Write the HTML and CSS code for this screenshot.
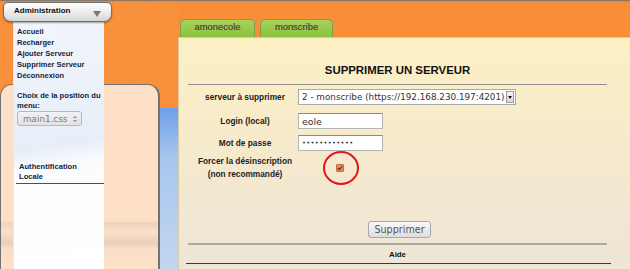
FILE: index.html
```html
<!DOCTYPE html>
<html lang="fr">
<head>
    <meta charset="UTF-8">
    <meta name="viewport" content="width=device-width, initial-scale=1.0">
    <title>Supprimer un serveur</title>
    <link rel="stylesheet" href="styles.css">
</head>
<body>
    <div class="page">
        <aside class="side">
            <div class="deco-peach"></div>
            <div class="deco-blue"></div>
            <nav class="menu">
                <div class="menu-head">Administration <span class="caret"></span></div>
                <div class="menu-body">
                    <ul class="menu-links">
                        <li><a href="#">Accueil</a></li>
                        <li><a href="#">Recharger</a></li>
                        <li><a href="#">Ajouter Serveur</a></li>
                        <li><a href="#">Supprimer Serveur</a></li>
                        <li><a href="#">Déconnexion</a></li>
                    </ul>
                    <p class="menu-label">Choix de la position du menu:</p>
                    <div class="css-select">main1.css <span class="spin"><i class="up"></i><i class="down"></i></span></div>
                    <p class="auth">Authentification<br>Locale</p>
                </div>
            </nav>
        </aside>
        <main class="main">
            <div class="tabs">
                <span class="tab">amonecole</span>
                <span class="tab">monscribe</span>
            </div>
            <div class="panel">
                <div class="inner">
                    <h1>SUPPRIMER UN SERVEUR</h1>
                    <form class="form" onsubmit="event.preventDefault();">
                        <div class="row row-server">
                            <label>serveur à supprimer</label>
                            <div class="select">
                                <span>2 - monscribe (https://192.168.230.197:4201)</span>
                                <span class="select-arrow"></span>
                            </div>
                        </div>
                        <div class="row row-login">
                            <label>Login (local)</label>
                            <input type="text" class="field" value="eole">
                        </div>
                        <div class="row row-pass">
                            <label>Mot de passe</label>
                            <input type="password" class="field" value="eoleeoleeole">
                        </div>
                        <div class="row row-force">
                            <label>Forcer la désinscription<br>(non recommandé)</label>
                            <div class="check-cell">
                                <span class="tick">
                                    <svg width="6" height="6" viewBox="0 0 6 6"><path d="M0.8 3 L2.4 4.6 L5.3 1.2" fill="none" stroke="#5b3020" stroke-width="1.1"/></svg>
                                </span>
                                <span class="mark"></span>
                            </div>
                        </div>
                        <div class="actions">
                            <button type="submit">Supprimer</button>
                        </div>
                    </form>
                    <div class="help">Aide</div>
                    <div class="bottom-rule"></div>
                </div>
            </div>
        </main>
    </div>
</body>
</html>
```

FILE: styles.css
```css
* {
    margin: 0;
    padding: 0;
    box-sizing: border-box;
}
body {
    width: 630px;
    height: 269px;
    overflow: hidden;
    font-family: "Liberation Sans", Arial, sans-serif;
    background: #f98e38;
}
.page {
    display: flex;
    height: 269px;
    background: #f98e38;
    box-shadow: inset 0 1px 0 #8b7766, inset 0 2px 0 #d98a4a;
}

/* left column */
.side {
    position: relative;
    width: 178px;
    display: flex;
    background: repeating-linear-gradient(135deg, rgba(255,255,255,0.06) 0 1px, transparent 1px 3px);
}
.deco-peach {
    width: 160px;
    margin-top: 84px;
    border: 1px solid #727272;
    border-right-width: 2px;
    border-bottom: none;
    border-radius: 12px 12px 0 0;
    background: linear-gradient(#fee0c8 0, #fee0c8 136px, #ecd3bd 138px, #f6dac3 143px, #fee0c8 146px, #f3d8c1 152px, #e8d0bb 158px, #fbdec7 164px, #fee0c8 100%);
}
.deco-blue {
    width: 18px;
    margin-top: 108px;
    background: linear-gradient(#6d9fe7, #a7c6ef 30%, #c3d6ee);
}
.menu {
    position: absolute;
    left: 3px;
    top: 2px;
    width: 109px;
}
.menu-head {
    position: relative;
    height: 20px;
    padding-left: 10px;
    border: 1px solid #707070;
    border-radius: 5px 5px 8px 8px;
    background: linear-gradient(#ffffff, #e9e9e9 60%, #d6d6d6);
    box-shadow: 0 1px 2px rgba(0, 0, 0, 0.35);
    font-size: 8px;
    font-weight: bold;
    line-height: 16px;
    color: #111;
}
.caret {
    position: absolute;
    right: 10px;
    top: 8px;
    border-left: 4px solid transparent;
    border-right: 4px solid transparent;
    border-top: 6px solid #7a7a7a;
}
.menu-body {
    margin-left: 10px;
    width: 91px;
    height: 247px;
    padding: 4px 0 0 3px;
    background: linear-gradient(172deg, #f2f6fb 0%, #e7eef8 50%, #fbfcfe 58%, #ffffff 100%);
    border-left: 1px solid #e4e8ee;
}
.menu-links {
    list-style: none;
}
.menu-links li {
    font-size: 7.5px;
    font-weight: bold;
    line-height: 11px;
}
.menu-links a {
    color: #15233a;
    text-decoration: none;
}
.menu-label {
    margin-top: 10px;
    font-size: 7.6px;
    font-weight: bold;
    line-height: 9.5px;
    color: #15233a;
}
.css-select {
    display: flex;
    align-items: center;
    width: 65px;
    height: 15px;
    margin-top: 1px;
    padding-left: 5px;
    border: 1px solid #b8b8b8;
    border-radius: 3px;
    background: linear-gradient(#f2f2f2, #e2e2e2);
    font-family: "DejaVu Sans", sans-serif;
    font-size: 8.8px;
    color: #7a7a7a;
}
.spin {
    display: flex;
    flex-direction: column;
    gap: 2px;
    margin-left: auto;
    margin-right: 4px;
}
.spin i {
    display: block;
    border-left: 2px solid transparent;
    border-right: 2px solid transparent;
}
.spin .up {
    border-bottom: 2px solid #888;
}
.spin .down {
    border-top: 2px solid #888;
}
.auth {
    margin-top: 36px;
    margin-left: -1px;
    padding: 0 0 1px 3px;
    border-bottom: 1px solid #4e4e4e;
    font-size: 7.6px;
    font-weight: bold;
    line-height: 10px;
    color: #15233a;
}

/* main column */
.main {
    flex: 1;
    display: flex;
    flex-direction: column;
}
.tabs {
    height: 37px;
    display: flex;
    align-items: flex-end;
    gap: 5px;
    padding-left: 2px;
}
.tab {
    width: 75px;
    height: 18px;
    padding-top: 1px;
    border: 1px solid #8a9d4c;
    border-bottom: none;
    border-radius: 5px 5px 0 0;
    background: linear-gradient(#a6d25a, #8cc140);
    text-align: center;
    font-size: 9.4px;
    line-height: 11px;
    color: #5c5140;
    text-shadow: 0 0 0.4px #5c5140;
}
.tab + .tab {
    width: 73px;
}
.panel {
    flex: 1;
    border-top: 1px solid #dcc9a4;
    border-left: 1px solid #d9c7a2;
    background: linear-gradient(#fdf0c4, #f6eacc 45%, #eee5d7);
}
.inner {
    width: 419px;
    margin-left: 9px;
}
.inner h1 {
    margin-top: 26px;
    padding-bottom: 7px;
    border-bottom: 1px solid #8e8e8e;
    text-align: center;
    font-size: 11.4px;
    line-height: 13px;
    color: #111;
}
.form {
    padding-left: 4px;
}
.row {
    display: flex;
    align-items: center;
}
.row label {
    width: 106px;
    text-align: center;
    font-size: 8.3px;
    font-weight: bold;
    line-height: 12.5px;
    color: #1d1d1d;
}
.row-server {
    margin-top: 4px;
    height: 16px;
}
.row-login {
    margin-top: 8px;
    height: 16px;
}
.row-pass {
    margin-top: 6px;
    height: 16px;
}
.row-force {
    margin-top: 4px;
    height: 25px;
}
.select {
    display: flex;
    align-items: center;
    width: 218px;
    height: 16px;
    padding: 0 1px 0 3px;
    border: 1px solid #a9a9a9;
    background: #fff;
    font-family: "DejaVu Sans", sans-serif;
    font-size: 8.8px;
    color: #333;
    white-space: nowrap;
}
.select-arrow {
    position: relative;
    margin-left: auto;
    width: 8px;
    height: 12px;
    border: 1px solid #9a9a9a;
    background: linear-gradient(#f3f3f3, #dcdcdc);
}
.select-arrow::after {
    content: "";
    position: absolute;
    left: 1px;
    top: 4px;
    border-left: 2px solid transparent;
    border-right: 2px solid transparent;
    border-top: 3px solid #111;
}
.field {
    width: 85px;
    height: 16px;
    padding: 0 3px;
    border: 1px solid #b5b5b5;
    border-top-color: #8a8a8a;
    background: #fff;
    outline: none;
    font-family: "DejaVu Sans", sans-serif;
    font-size: 9.4px;
    color: #333;
}
.row-pass .field {
    font-size: 6.6px;
    letter-spacing: 0.4px;
}
.check-cell {
    position: relative;
    margin-left: 38px;
    width: 8px;
    height: 8px;
}
.tick {
    display: flex;
    align-items: center;
    justify-content: center;
    width: 8px;
    height: 8px;
    border: 1px solid #c46a44;
    border-radius: 1px;
    background: #ea8a60;
}
.mark {
    position: absolute;
    left: -13px;
    top: -13px;
    width: 36px;
    height: 34px;
    border: 2px solid #e3141c;
    border-radius: 50%;
}
.actions {
    margin-top: 39px;
    text-align: center;
}
.actions button {
    width: 63px;
    height: 17px;
    border: 1px solid #a8a8a8;
    border-radius: 3px;
    background: linear-gradient(#f8f8f8, #dedede);
    font-family: "DejaVu Sans", sans-serif;
    font-size: 9.6px;
    color: #555;
    cursor: pointer;
}
.help {
    margin-top: 5px;
    padding-top: 4px;
    border-top: 2px solid #a9a9a9;
    text-align: center;
    font-size: 7.8px;
    font-weight: bold;
    line-height: 12px;
    color: #111;
}
.bottom-rule {
    margin: 2px -4px 0 -2px;
    border-top: 1px solid #3c3c3c;
}
```
